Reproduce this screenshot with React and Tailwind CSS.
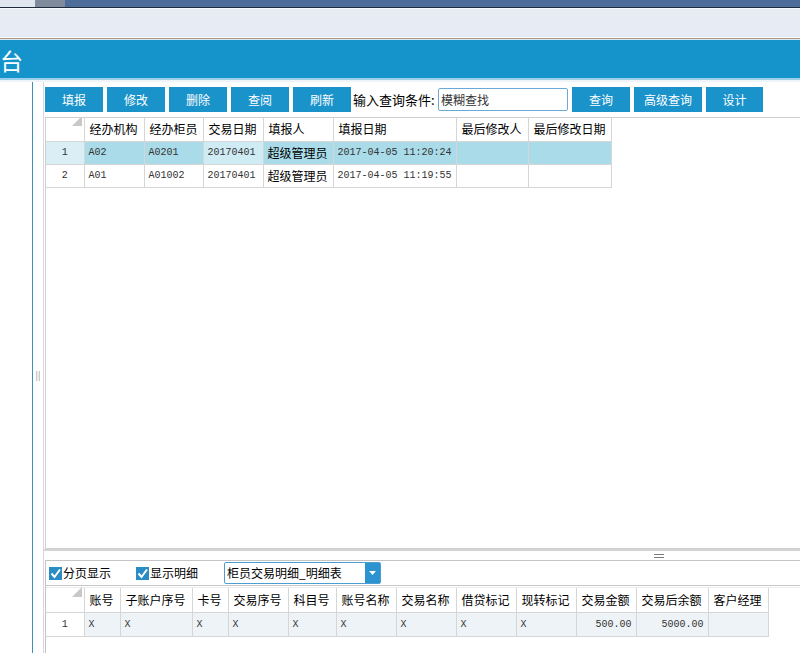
import React from "react";

const CJK = { fontFamily: '"Noto Sans CJK SC", "Noto Sans", sans-serif' };
const MONO = { fontFamily: '"Liberation Mono", "Noto Sans CJK SC", monospace' };

function Btn({ children, w = 58 }) {
  return (
    <div
      className="h-[25px] bg-[#1a92ca] text-white text-[12px] flex items-center justify-center shrink-0"
      style={{ width: w }}
    >
      {children}
    </div>
  );
}

function Corner() {
  return (
    <div className="relative h-full w-full">
      <svg className="absolute right-[2px] bottom-[3px]" width="10" height="10" viewBox="0 0 10 10">
        <polygon points="10,0 10,10 0,10" fill="#c8c8c8" />
      </svg>
    </div>
  );
}

const topCols = [
  { w: 38 },
  { w: 60, t: "经办机构" },
  { w: 59, t: "经办柜员" },
  { w: 60, t: "交易日期" },
  { w: 70, t: "填报人" },
  { w: 123, t: "填报日期" },
  { w: 72, t: "最后修改人" },
  { w: 83, t: "最后修改日期" },
];

const topRows = [
  ["1", "A02", "A0201", "20170401", "超级管理员", "2017-04-05 11:20:24", "", ""],
  ["2", "A01", "A01002", "20170401", "超级管理员", "2017-04-05 11:19:55", "", ""],
];

const botCols = [
  { w: 38 },
  { w: 36, t: "账号" },
  { w: 72, t: "子账户序号" },
  { w: 36, t: "卡号" },
  { w: 60, t: "交易序号" },
  { w: 48, t: "科目号" },
  { w: 60, t: "账号名称" },
  { w: 60, t: "交易名称" },
  { w: 60, t: "借贷标记" },
  { w: 60, t: "现转标记" },
  { w: 60, t: "交易金额" },
  { w: 72, t: "交易后余额" },
  { w: 60, t: "客户经理" },
];

const botRow = ["1", "X", "X", "X", "X", "X", "X", "X", "X", "X", "500.00", "5000.00", ""];

function Check({ label }) {
  return (
    <div className="flex items-center text-[12px] text-black" style={CJK}>
      <svg width="13" height="13" viewBox="0 0 13 13" className="mr-[1px]">
        <rect x="0" y="0" width="13" height="13" fill="#2a8cc4" />
        <polyline points="2.5,6.5 5.5,10 11,2.5" fill="none" stroke="#ffffff" strokeWidth="2" />
      </svg>
      {label}
    </div>
  );
}

export default function App() {
  return (
    <div className="w-[800px] h-[653px] overflow-hidden bg-white flex flex-col" style={CJK}>
      {/* top window bar */}
      <div className="h-[7px] flex shrink-0">
        <div className="w-[35px] bg-[#dfe6ee]" />
        <div className="w-[30px] bg-[#7f8a9a]" />
        <div className="flex-1 bg-[#4c6d99]" />
      </div>
      <div className="h-[1px] bg-[#1e2b3c] shrink-0" />
      <div className="h-[29px] bg-[#e7ecf4] border-t border-[#f4f8fd] shrink-0" />
      <div className="h-[1px] bg-[#ffffff] shrink-0" />
      <div className="h-[1px] bg-[#b29a86] shrink-0" />
      <div className="h-[1px] bg-[#d8e8f0] shrink-0" />
      {/* blue header */}
      <div className="h-[38px] bg-[#1594cc] flex items-center shrink-0">
        <span className="text-white text-[23px] leading-none mt-[2px]" style={CJK}>台</span>
      </div>
      <div className="h-[2px] bg-[#9ccfe8] shrink-0" />
      <div className="h-[2px] bg-[#eef5f9] shrink-0" />

      {/* main */}
      <div className="flex-1 flex min-h-0">
        <div className="w-[33px] shrink-0 bg-white border-r border-[#3d8fbd]" />
        <div className="w-[11px] shrink-0 bg-white flex items-center justify-center border-r border-[#d8d8d8]">
          <span className="text-[#8a8a8a] text-[9px] leading-none mt-[15px]">||</span>
        </div>

        <div className="flex-1 min-w-0 flex flex-col">
          {/* toolbar */}
          <div className="flex items-center gap-[4px] pl-[1px] pt-[5px] h-[30px] shrink-0">
            <Btn>填报</Btn>
            <Btn>修改</Btn>
            <Btn>删除</Btn>
            <Btn>查阅</Btn>
            <Btn>刷新</Btn>
            <span className="text-[13px] text-black ml-[-2px] whitespace-nowrap w-[80px]">输入查询条件:</span>
            <div className="w-[130px] h-[23px] border border-[#6aaad4] rounded-[2px] bg-white flex items-center pl-[2px] text-[12px] text-[#333] ml-[1px]">
              模糊查找
            </div>
            <Btn>查询</Btn>
            <Btn w={68}>高级查询</Btn>
            <Btn w={57}>设计</Btn>
          </div>

          {/* top grid */}
          <div className="mt-[5px] ml-[1px] h-[432px] shrink-0 border-l border-t border-b border-[#cfcfcf] bg-white overflow-hidden">
            <table className="border-collapse text-[12px]" style={{ tableLayout: "fixed" }}>
              <colgroup>
                {topCols.map((c, i) => (
                  <col key={i} style={{ width: c.w }} />
                ))}
              </colgroup>
              <thead>
                <tr className="h-[23px]">
                  {topCols.map((c, i) => (
                    <th
                      key={i}
                      className={`font-normal text-left border-r border-b border-[#d6d6d6] text-black whitespace-nowrap ${i === 0 ? "px-0" : "px-[5px]"}`}
                    >
                      {i === 0 ? <Corner /> : c.t}
                    </th>
                  ))}
                </tr>
              </thead>
              <tbody>
                {topRows.map((r, ri) => (
                  <tr key={ri} className={`h-[23px] ${ri === 0 ? "bg-[#a9dbe9]" : "bg-white"}`}>
                    {r.map((v, ci) => {
                      let cls = "border-r border-b border-[#d6d6d6] px-[4px] whitespace-nowrap overflow-hidden";
                      if (ci === 0) cls += " text-center";
                      if (ri === 0 && ci === 0) cls += " bg-[#d9eff5]";
                      if (ri === 0 && ci === 3) cls += " bg-[#cfebf3]";
                      const isCjk = ci === 4;
                      return (
                        <td
                          key={ci}
                          className={cls + (isCjk ? " text-[12px] text-black" : " text-[11px] text-[#333]")}
                          style={isCjk ? CJK : { ...MONO, fontSize: 10 }}
                        >
                          {v}
                        </td>
                      );
                    })}
                  </tr>
                ))}
              </tbody>
            </table>
          </div>

          {/* splitter */}
          <div className="h-[11px] shrink-0 border-t-2 border-[#d4d4d4] relative">
            <div className="absolute left-[610px] top-[3px] w-[10px] h-[4px] border-t border-b border-[#7a7a7a]" />
          </div>

          {/* bottom panel */}
          <div className="flex-1 ml-[1px] border-t border-l border-[#c4c4c4] flex flex-col min-h-0">
            <div className="h-[25px] shrink-0 flex items-center border-b border-[#c8c8c8] pl-[3px]">
              <Check label="分页显示" />
              <div className="w-[25px]" />
              <Check label="显示明细" />
              <div className="w-[26px]" />
              <div className="w-[157px] h-[22px] border border-[#4a9ed2] rounded-[2px] bg-white flex items-center justify-between">
                <span className="pl-[2px] text-[12px] text-black">柜员交易明细_明细表</span>
                <div className="w-[15px] h-[20px] bg-[#2b93cf] flex items-center justify-center">
                  <svg width="7" height="4" viewBox="0 0 7 4">
                    <polygon points="0,0 7,0 3.5,4" fill="#ffffff" />
                  </svg>
                </div>
              </div>
            </div>
            <div className="h-[1px] bg-[#ececec] mt-[1px] shrink-0" />
            <div className="flex-1 bg-white min-h-0">
              <table className="border-collapse text-[12px]" style={{ tableLayout: "fixed" }}>
                <colgroup>
                  {botCols.map((c, i) => (
                    <col key={i} style={{ width: c.w }} />
                  ))}
                </colgroup>
                <thead>
                  <tr className="h-[24px]">
                    {botCols.map((c, i) => (
                      <th
                        key={i}
                        className={`font-normal text-left border-r border-b border-[#d6d6d6] text-black whitespace-nowrap ${i === 0 ? "px-0" : "px-[5px]"}`}
                      >
                        {i === 0 ? <Corner /> : c.t}
                      </th>
                    ))}
                  </tr>
                </thead>
                <tbody>
                  <tr className="h-[24px] bg-[#eef3f7]">
                    {botRow.map((v, ci) => (
                      <td
                        key={ci}
                        className={`border-r border-b border-[#d6d6d6] px-[4px] whitespace-nowrap text-[#333] ${ci === 0 ? "text-center bg-white" : ""} ${ci === 10 || ci === 11 ? "text-right" : ""}`}
                        style={{ ...MONO, fontSize: 10 }}
                      >
                        {v}
                      </td>
                    ))}
                  </tr>
                </tbody>
              </table>
            </div>
          </div>
        </div>
      </div>
    </div>
  );
}
